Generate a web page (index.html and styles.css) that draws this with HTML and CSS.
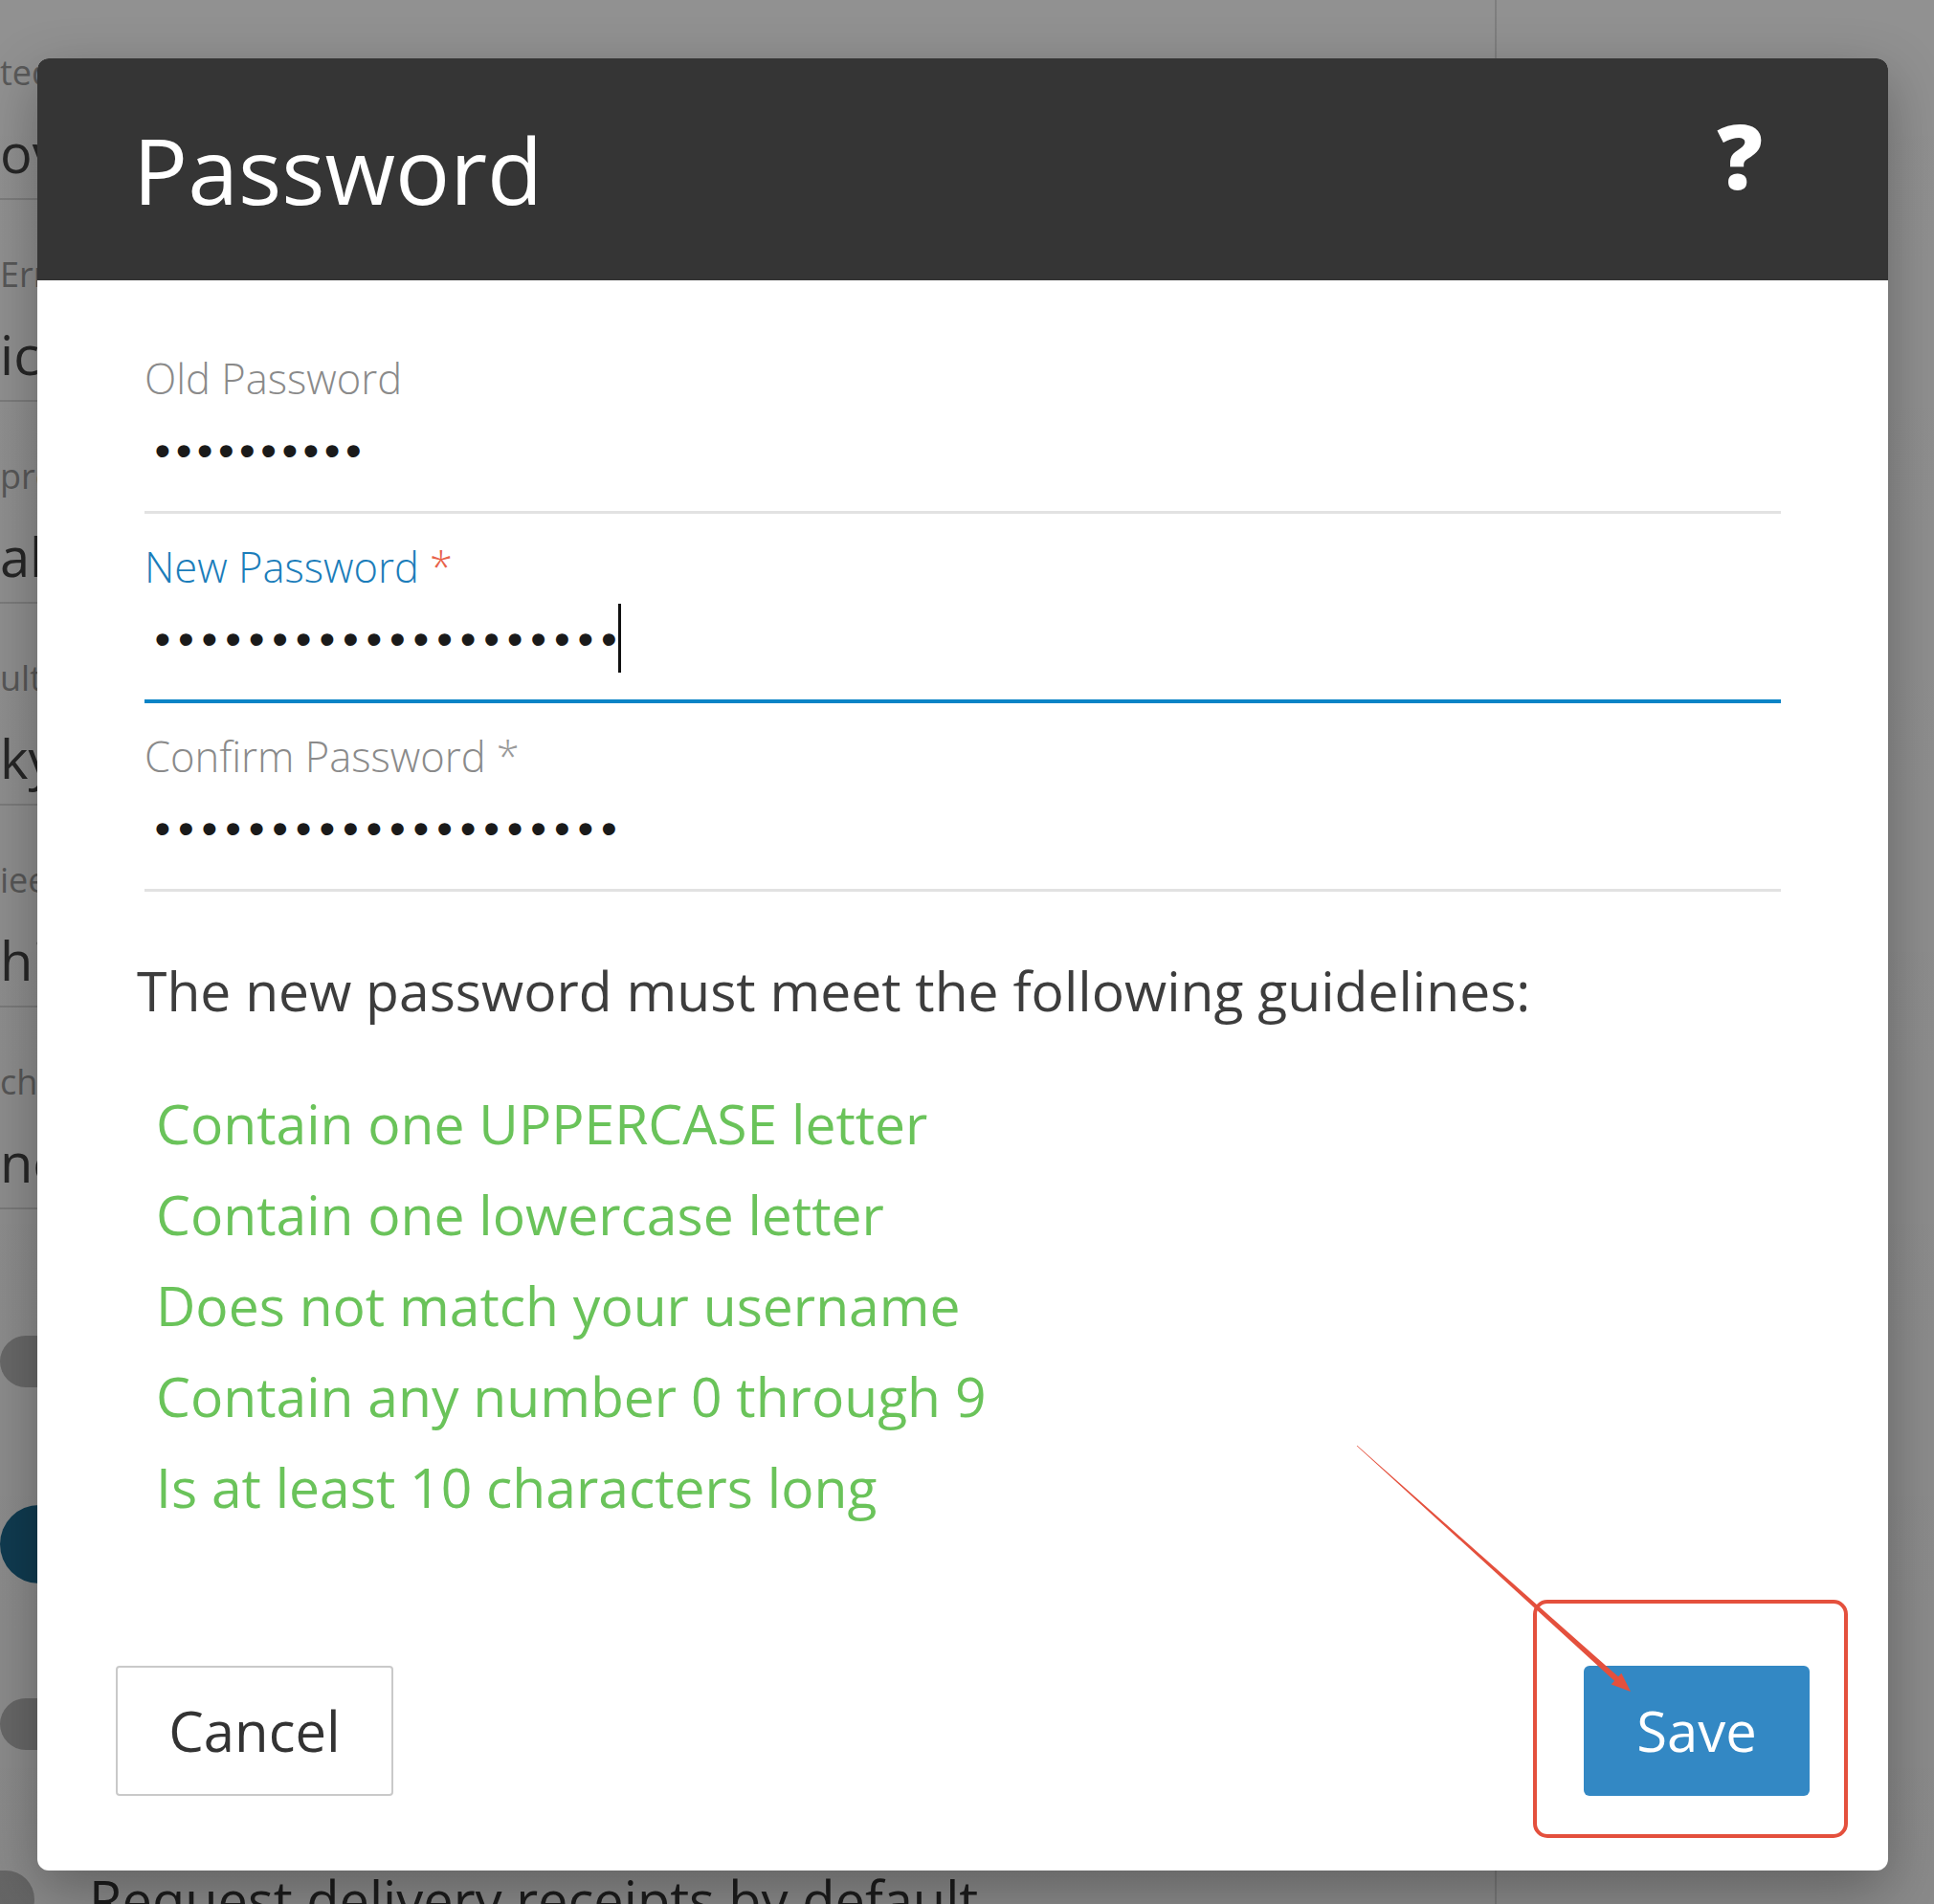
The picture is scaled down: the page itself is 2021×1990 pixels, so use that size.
FILE: index.html
```html
<!DOCTYPE html>
<html lang="en">
<head>
<meta charset="utf-8">
<title>Password</title>
<link rel="stylesheet" href="styles.css">
</head>
<body>
<div class="page">
  <main class="settings">
    <div class="setting"><div class="setting-label">ted th</div><div class="setting-value">ove</div></div>
    <div class="setting"><div class="setting-label">Err</div><div class="setting-value">ico</div></div>
    <div class="setting"><div class="setting-label">pre</div><div class="setting-value">alw</div></div>
    <div class="setting"><div class="setting-label">ult</div><div class="setting-value">kyo</div></div>
    <div class="setting"><div class="setting-label">iee</div><div class="setting-value">hig</div></div>
    <div class="setting"><div class="setting-label">che</div><div class="setting-value">nev</div></div>
    <div class="options">
      <div class="option option-a"><span class="toggle"></span></div>
      <div class="option option-b"><span class="toggle toggle-on"></span></div>
      <div class="option option-c"><span class="toggle"></span></div>
      <div class="option option-d"><span class="toggle toggle-small"></span><span class="option-text">Request delivery receipts by default</span></div>
    </div>
  </main>
  <div class="gap"></div>
  <aside class="aside"></aside>
</div>
<div class="overlay"></div>

<section class="dialog" role="dialog" aria-label="Password">
  <header class="dialog-head">
    <h1 class="dialog-title">Password</h1>
    <span class="dialog-help">?</span>
  </header>
  <div class="dialog-body">
    <div class="field">
      <label class="field-label">Old Password</label>
      <div class="field-value"><span class="dots dots-old">••••••••••</span></div>
    </div>
    <div class="field field-focus">
      <label class="field-label">New Password <span class="req">*</span></label>
      <div class="field-value"><span class="dots">••••••••••••••••••••</span><span class="caret"></span></div>
    </div>
    <div class="field">
      <label class="field-label">Confirm Password <span class="req req-muted">*</span></label>
      <div class="field-value"><span class="dots">••••••••••••••••••••</span></div>
    </div>
    <p class="guide-intro">The new password must meet the following guidelines:</p>
    <ul class="rules">
      <li>Contain one UPPERCASE letter</li>
      <li>Contain one lowercase letter</li>
      <li>Does not match your username</li>
      <li>Contain any number 0 through 9</li>
      <li>Is at least 10 characters long</li>
    </ul>
  </div>
  <footer class="dialog-foot">
    <button class="btn btn-cancel" type="button">Cancel</button>
    <button class="btn btn-save" type="button">Save</button>
  </footer>
</section>

<svg class="annotation" viewBox="0 0 2021 1990" width="2021" height="1990" aria-hidden="true">
  <rect x="1604" y="1674" width="325" height="245" rx="13" ry="13" fill="none" stroke="#e4503d" stroke-width="4"/>
  <polygon points="1417.8,1511.2 1688.6,1758.2 1692.6,1753.8 1418.2,1510.8" fill="#e4503d"/>
  <polygon points="1704,1768 1683.7,1760.6 1694.4,1748.7" fill="#e4503d"/>
</svg>
</body>
</html>
```

FILE: styles.css
```css
html, body {
  margin: 0;
  padding: 0;
}

body {
  width: 2021px;
  height: 1990px;
  overflow: hidden;
  position: relative;
  background: #ffffff;
  font-family: "Open Sans", "Noto Sans", sans-serif;
}

/* ---------- underlying page ---------- */
.page {
  display: grid;
  grid-template-columns: 140px 1422px 1fr;
  height: 100%;
}

.settings {
  margin-top: -2px;
}

.setting {
  height: 211px;
  box-sizing: border-box;
  padding-top: 56px;
  border-bottom: 2px solid #dcdcdc;
  white-space: nowrap;
}

.setting-label {
  font-size: 36px;
  line-height: 44px;
  color: #9c9c9c;
}

.setting-value {
  margin-top: 26px;
  font-size: 56px;
  line-height: 70px;
  color: #444444;
}

.options {
  display: flex;
  flex-direction: column;
}

.option {
  display: flex;
  align-items: center;
  gap: 57px;
}

.option-a { margin-top: 132px; }
.option-b { margin-top: 123px; }
.option-c { margin-top: 120px; }
.option-d { margin-top: 118px; }

.toggle {
  display: block;
  flex: none;
  width: 120px;
  height: 54px;
  border-radius: 27px;
  background: #bdbdbd;
}

.toggle-on {
  height: 82px;
  border-radius: 41px;
  background: #1d6c92;
}

.toggle-small {
  width: 36px;
  height: 60px;
  border-radius: 0 30px 30px 0;
}

.option-text {
  font-size: 56px;
  line-height: 76px;
  color: #333333;
  white-space: nowrap;
}

.aside {
  border-left: 2px solid #dedede;
}

.overlay {
  position: absolute;
  inset: 0;
  background: linear-gradient(rgba(0, 0, 0, 0.43), rgba(0, 0, 0, 0.46));
}

/* ---------- dialog ---------- */
.dialog {
  position: absolute;
  left: 39px;
  top: 61px;
  width: 1934px;
  height: 1894px;
  display: flex;
  flex-direction: column;
  background: #ffffff;
  border-radius: 12px;
  overflow: hidden;
  box-shadow: 0 20px 60px rgba(0, 0, 0, 0.3);
}

.dialog-head {
  flex: none;
  height: 232px;
  box-sizing: border-box;
  display: flex;
  align-items: center;
  justify-content: space-between;
  padding: 0 131px 0 100px;
  background: #353535;
}

.dialog-title {
  margin: 0;
  font-size: 95px;
  font-weight: 400;
  line-height: 1;
  color: #ffffff;
}

.dialog-help {
  align-self: flex-start;
  margin-top: 54px;
  font-size: 94px;
  font-weight: 800;
  line-height: 1;
  color: #ffffff;
}

.dialog-body {
  flex: 1;
  padding: 78px 104px 0;
}

.field {
  margin: 0 8px;
  padding-bottom: 15px;
  border-bottom: 3px solid #e2e2e2;
}

.field + .field {
  margin-top: 31px;
}

.field-label {
  display: block;
  font-size: 43.5px;
  line-height: 50px;
  font-weight: 300;
  color: #8a8a8a;
}

.field-focus {
  border-bottom: 4px solid #0a84c6;
}

.field-focus .field-label {
  color: #1b7dba;
}

.req {
  color: #e8624a;
}

.req-muted {
  color: #9a9a9a;
}

.field-value {
  height: 98px;
  display: flex;
  align-items: center;
}

.dots {
  padding-left: 11px;
  font-family: "Liberation Sans", Arial, sans-serif;
  font-size: 45px;
  font-weight: 700;
  line-height: 1;
  letter-spacing: 8.8px;
  color: #1a1a1a;
}

.dots-old {
  letter-spacing: 6.4px;
}

.caret {
  display: block;
  width: 3px;
  height: 72px;
  margin-left: -7px;
  background: #111111;
}

.guide-intro {
  margin: 65px 0 0;
  font-size: 57px;
  line-height: 76px;
  color: #3d3d3d;
}

.rules {
  margin: 54px 0 0;
  padding: 0 0 0 20px;
  list-style: none;
  font-size: 57px;
  line-height: 95px;
  color: #6ac35a;
}

.dialog-foot {
  flex: none;
  display: flex;
  justify-content: space-between;
  align-items: flex-end;
  padding: 0 82px 78px;
}

.btn {
  height: 136px;
  box-sizing: border-box;
  font-family: inherit;
  font-size: 58px;
  line-height: 1;
  padding: 0;
  cursor: pointer;
}

.btn-cancel {
  width: 290px;
  border: 2px solid #c9c9c9;
  border-radius: 4px;
  background: #ffffff;
  color: #333333;
}

.btn-save {
  width: 236px;
  border: 0;
  border-radius: 6px;
  background: #3388c4;
  color: #ffffff;
}

/* ---------- screenshot annotation ---------- */
.annotation {
  position: absolute;
  left: 0;
  top: 0;
  pointer-events: none;
}
```
